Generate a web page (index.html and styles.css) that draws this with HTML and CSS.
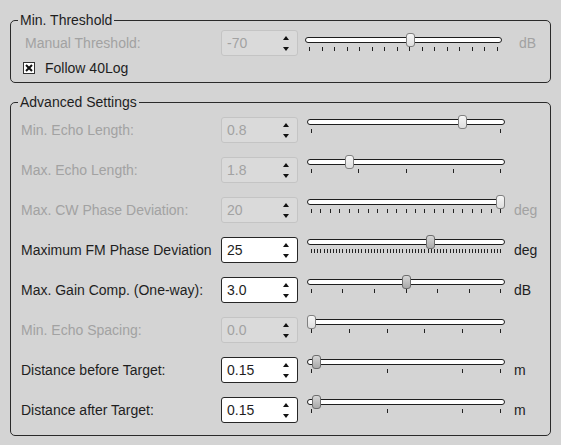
FILE: index.html
```html
<!DOCTYPE html>
<html>
<head>
	<title>Echo Settings</title>
	<link rel="stylesheet" href="styles.css">
</head>
<body>
	<div class="panel">
		<fieldset class="group g1">
			<legend>Min. Threshold</legend>
			<div class="row off">
				<span class="name">Manual Threshold:</span>
				<div class="spin"><span class="val">-70</span><span class="arrows"><i class="up"></i><i class="down"></i></span></div>
				<div class="slider"><div class="track"><span class="thumb" style="--v:.537"></span></div><div class="ticks" data-n="16"></div></div>
				<span class="unit">dB</span>
			</div>
			<div class="check">
				<span class="box"><svg width="8" height="8" viewBox="0 0 8 8"><path d="M1 1L7 7M7 1L1 7" stroke="#111" stroke-width="2"/></svg></span>
				Follow 40Log
			</div>
		</fieldset>

		<fieldset class="group g2">
			<legend>Advanced Settings</legend>
			<div class="row off">
				<span class="name">Min. Echo Length:</span>
				<div class="spin"><span class="val">0.8</span><span class="arrows"><i class="up"></i><i class="down"></i></span></div>
				<div class="slider"><div class="track"><span class="thumb" style="--v:.8"></span></div><div class="ticks" data-n="2"></div></div>
				<span class="unit"></span>
			</div>
			<div class="row off">
				<span class="name">Max. Echo Length:</span>
				<div class="spin"><span class="val">1.8</span><span class="arrows"><i class="up"></i><i class="down"></i></span></div>
				<div class="slider"><div class="track"><span class="thumb" style="--v:.2"></span></div><div class="ticks" data-n="5"></div></div>
				<span class="unit"></span>
			</div>
			<div class="row off">
				<span class="name">Max. CW Phase Deviation:</span>
				<div class="spin"><span class="val">20</span><span class="arrows"><i class="up"></i><i class="down"></i></span></div>
				<div class="slider"><div class="track"><span class="thumb" style="--v:1"></span></div><div class="ticks" data-n="21"></div></div>
				<span class="unit">deg</span>
			</div>
			<div class="row">
				<span class="name">Maximum FM Phase Deviation</span>
				<div class="spin"><span class="val">25</span><span class="arrows"><i class="up"></i><i class="down"></i></span></div>
				<div class="slider"><div class="track"><span class="thumb" style="--v:.627"></span></div><div class="ticks" data-n="61"></div></div>
				<span class="unit">deg</span>
			</div>
			<div class="row">
				<span class="name">Max. Gain Comp. (One-way):</span>
				<div class="spin"><span class="val">3.0</span><span class="arrows"><i class="up"></i><i class="down"></i></span></div>
				<div class="slider"><div class="track"><span class="thumb" style="--v:.5"></span></div><div class="ticks" data-n="7"></div></div>
				<span class="unit">dB</span>
			</div>
			<div class="row off">
				<span class="name">Min. Echo Spacing:</span>
				<div class="spin"><span class="val">0.0</span><span class="arrows"><i class="up"></i><i class="down"></i></span></div>
				<div class="slider"><div class="track"><span class="thumb" style="--v:0"></span></div><div class="ticks" data-n="6"></div></div>
				<span class="unit"></span>
			</div>
			<div class="row">
				<span class="name">Distance before Target:</span>
				<div class="spin"><span class="val">0.15</span><span class="arrows"><i class="up"></i><i class="down"></i></span></div>
				<div class="slider"><div class="track"><span class="thumb" style="--v:.025"></span></div><div class="ticks" data-at="0,.4,.8,1"></div></div>
				<span class="unit">m</span>
			</div>
			<div class="row">
				<span class="name">Distance after Target:</span>
				<div class="spin"><span class="val">0.15</span><span class="arrows"><i class="up"></i><i class="down"></i></span></div>
				<div class="slider"><div class="track"><span class="thumb" style="--v:.025"></span></div><div class="ticks" data-at="0,.4,.8,1"></div></div>
				<span class="unit">m</span>
			</div>
		</fieldset>
	</div>
	<script src="ticks.js"></script>
</body>
</html>
```

FILE: styles.css
```css
body{
	margin: 0;
	background: #d4d4d4;
	font-family: "Liberation Sans", Arial, sans-serif;
	font-size: 14px;
	line-height: 16px;
	color: #1e1e1e;
}
.panel{
	display: flex;
	flex-direction: column;
	gap: 11px;
	padding: 12px 10px 0 10px;
}
.group{
	margin: 0;
	border: 1px solid #2a2a2a;
	border-radius: 5px;
	display: flex;
	flex-direction: column;
}
.group legend{
	padding: 0 2px;
}
.g1{
	padding: 2px 0 6px 14px;
	gap: 4px;
}
.g1 legend{
	margin-left: -7px;
}
.g2{
	padding: 7px 0 12px 10px;
	gap: 14px;
}
.g2 legend{
	margin-left: -3px;
}

.row{
	display: grid;
	height: 26px;
	align-items: center;
}
.g1 .row{
	grid-template-columns: 189px 77px 197px auto;
	column-gap: 7px;
}
.g1 .row .unit{
	margin-left: 10px;
}
.g2 .row{
	grid-template-columns: 191px 77px 198px auto;
	column-gap: 9px;
}
.row.off{
	color: #a2a2a2;
}

/* spin box */
.spin{
	box-sizing: border-box;
	height: 26px;
	border: 1px solid #262626;
	border-radius: 3px;
	background: #fff;
	display: flex;
	align-items: center;
	justify-content: space-between;
	padding: 0 8px 0 5px;
}
.off .spin{
	background: #dadada;
	border-color: #c4c4c4;
}
.arrows{
	display: flex;
	flex-direction: column;
	gap: 7px;
}
.arrows i{
	width: 0;
	height: 0;
	border-left: 3.5px solid transparent;
	border-right: 3.5px solid transparent;
}
.arrows .up{
	border-bottom: 4px solid #111;
}
.arrows .down{
	border-top: 4px solid #111;
}

/* slider */
.slider{
	align-self: start;
	padding-top: 2px;
}
.g1 .slider{
	padding-top: 7px;
}
.track{
	position: relative;
	box-sizing: border-box;
	height: 6px;
	border: 1px solid #1e1e1e;
	border-radius: 3px;
	background: #fff;
}
.thumb{
	position: absolute;
	top: -5px;
	left: calc((100% - 7px) * var(--v) - 1px);
	box-sizing: border-box;
	width: 9px;
	height: 14px;
	border: 1px solid #6c6c6c;
	border-radius: 3px;
	background: linear-gradient(#d6d6d6, #a9a9a9);
}
.off .thumb{
	background: linear-gradient(#f6f6f6, #dedede);
	border-color: #808080;
}
.ticks{
	position: relative;
	height: 4px;
	margin: 4px 4px 0 4px;
}
.ticks i{
	position: absolute;
	top: 0;
	width: 1px;
	height: 4px;
	background: #222;
}

/* checkbox */
.check{
	display: flex;
	align-items: center;
	gap: 10px;
	height: 16px;
	margin-left: -2px;
}
.box{
	box-sizing: border-box;
	width: 12px;
	height: 12px;
	border: 1px solid #333;
	background: #fff;
	display: flex;
	align-items: center;
	justify-content: center;
}
.box svg{
	display: block;
}
```

FILE: ticks.js
```js
document.querySelectorAll(".ticks").forEach(function (el) {
	var at = el.dataset.at ? el.dataset.at.split(",").map(Number) : [];
	if (!at.length) {
		var n = +el.dataset.n;
		for (var i = 0; i < n; i++) at.push(i / (n - 1));
	}
	at.forEach(function (p) {
		var t = document.createElement("i");
		t.style.left = "calc((100% - 1px) * " + p + ")";
		el.appendChild(t);
	});
});
```
